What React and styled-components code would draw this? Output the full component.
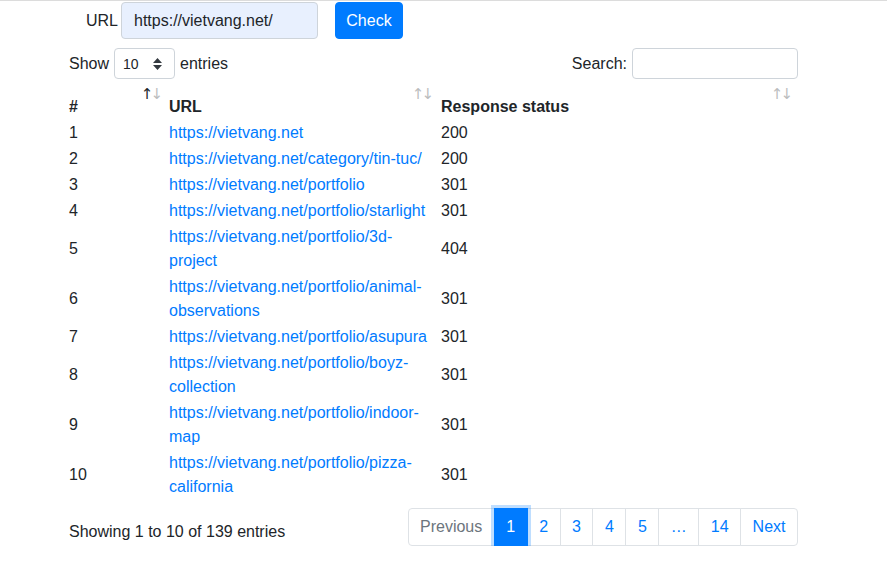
import React from "react";
import styled, { createGlobalStyle } from "styled-components";

// GLOBAL
const GlobalStyle = createGlobalStyle`
  * { box-sizing: border-box; }
  body {
    margin: 0;
    font-family: "Liberation Sans", Arial, sans-serif;
    font-size: 16px;
    line-height: 24px;
    color: #212529;
    background: #fff;
  }
`;

// STYLES
const Page = styled.div`
  border-top: 1px solid #dcdcdc;
  padding: 1px 0 0 69px;
`;

const Wrapper = styled.div`
  width: 729px;
`;

const CheckForm = styled.form`
  display: flex;
  align-items: center;
  margin-left: 17px;
  label {
    width: 35px;
  }
`;

const UrlInput = styled.input`
  width: 197px;
  height: 37px;
  padding: 0 12px;
  font: inherit;
  color: #212529;
  background: #e8f0fe;
  border: 1px solid #ced4da;
  border-radius: 4px;
  outline: none;
`;

const Button = styled.button`
  margin-left: 17px;
  width: 68px;
  height: 37px;
  padding: 0;
  font: inherit;
  color: #fff;
  background: #007bff;
  border: 1px solid #007bff;
  border-radius: 4px;
`;

const Controls = styled.div`
  display: flex;
  justify-content: space-between;
  align-items: center;
  margin-top: 9px;
  label {
    display: flex;
    align-items: center;
    gap: 5px;
  }
`;

const Select = styled.div`
  position: relative;
  width: 61px;
  height: 31px;
  padding: 0 8px;
  display: flex;
  align-items: center;
  font-size: 14px;
  border: 1px solid #ced4da;
  border-radius: 4px;
  svg {
    position: absolute;
    right: 12px;
    top: 9px;
  }
`;

const SearchInput = styled.input`
  width: 166px;
  height: 31px;
  border: 1px solid #ced4da;
  border-radius: 4px;
  outline: none;
`;

const Table = styled.table`
  width: 729px;
  margin-top: 6px;
  table-layout: fixed;
  border-collapse: collapse;
  th {
    position: relative;
    text-align: left;
    font-weight: 700;
    padding: 10px 0 1px;
  }
  td {
    padding: 1px 0;
    vertical-align: middle;
  }
  td.url {
    padding-right: 8px;
  }
  a {
    color: #007bff;
    text-decoration: none;
  }
`;

const Sort = styled.span`
  position: absolute;
  top: 2px;
  right: ${(p) => p.$right}px;
  font-family: "DejaVu Sans", sans-serif;
  font-size: 15px;
  font-weight: 400;
  line-height: 1;
  letter-spacing: -3px;
  span {
    color: #212529;
    opacity: 0.3;
  }
  span.on {
    opacity: 1;
  }
`;

const Footer = styled.div`
  display: flex;
  justify-content: space-between;
  align-items: flex-start;
  margin-top: 8px;
`;

const Info = styled.div`
  padding-top: 12px;
`;

const Pager = styled.ul`
  display: flex;
  list-style: none;
  margin: 0;
  padding: 0;
`;

const PageItem = styled.li`
  margin-left: -1px;
  padding: 7px 11.5px;
  line-height: 22px;
  border: 1px solid ${(p) => (p.$active ? "#007bff" : "#dee2e6")};
  color: ${(p) => (p.$active ? "#fff" : p.$disabled ? "#6c757d" : "#007bff")};
  background: ${(p) => (p.$active ? "#007bff" : "#fff")};
  box-shadow: ${(p) => (p.$active ? "0 0 0 3px rgba(0,123,255,.25)" : "none")};
  position: relative;
  z-index: ${(p) => (p.$active ? 2 : 1)};
  &:first-child {
    margin-left: 0;
    border-radius: 4px 0 0 4px;
  }
  &:last-child {
    border-radius: 0 4px 4px 0;
  }
`;

const rows = [
  ["https://vietvang.net", 200],
  ["https://vietvang.net/category/tin-tuc/", 200],
  ["https://vietvang.net/portfolio", 301],
  ["https://vietvang.net/portfolio/starlight", 301],
  ["https://vietvang.net/portfolio/3d-project", 404],
  ["https://vietvang.net/portfolio/animal-observations", 301],
  ["https://vietvang.net/portfolio/asupura", 301],
  ["https://vietvang.net/portfolio/boyz-collection", 301],
  ["https://vietvang.net/portfolio/indoor-map", 301],
  ["https://vietvang.net/portfolio/pizza-california", 301],
];

const pages = ["Previous", "1", "2", "3", "4", "5", "…", "14", "Next"];

const App = () => {
  return (
    <Page>
      <GlobalStyle />
      <Wrapper>
        <CheckForm onSubmit={(e) => e.preventDefault()}>
          <label>URL</label>
          <UrlInput defaultValue="https://vietvang.net/" />
          <Button>Check</Button>
        </CheckForm>

        <Controls>
          <label>
            Show
            <Select>
              10
              <svg width="9" height="12" viewBox="0 0 9 12">
                <path d="M4.5 0 L9 5 H0 Z M0 7 H9 L4.5 12 Z" fill="#343a40" />
              </svg>
            </Select>
            entries
          </label>
          <label>
            Search:
            <SearchInput />
          </label>
        </Controls>

        <Table>
          <colgroup>
            <col style={{ width: 100 }} />
            <col style={{ width: 272 }} />
            <col />
          </colgroup>
          <thead>
            <tr>
              <th>
                #
                <Sort $right={9}>
                  <span className="on">↑</span>
                  <span>↓</span>
                </Sort>
              </th>
              <th>
                URL
                <Sort $right={10}>
                  <span>↑</span>
                  <span>↓</span>
                </Sort>
              </th>
              <th>
                Response status
                <Sort $right={8}>
                  <span>↑</span>
                  <span>↓</span>
                </Sort>
              </th>
            </tr>
          </thead>
          <tbody>
            {rows.map(([url, status], i) => (
              <tr key={url}>
                <td>{i + 1}</td>
                <td className="url">
                  <a href="#">{url}</a>
                </td>
                <td>{status}</td>
              </tr>
            ))}
          </tbody>
        </Table>

        <Footer>
          <Info>Showing 1 to 10 of 139 entries</Info>
          <Pager>
            {pages.map((p) => (
              <PageItem key={p} $active={p === "1"} $disabled={p === "Previous"}>
                {p}
              </PageItem>
            ))}
          </Pager>
        </Footer>
      </Wrapper>
    </Page>
  );
};

export default App;
